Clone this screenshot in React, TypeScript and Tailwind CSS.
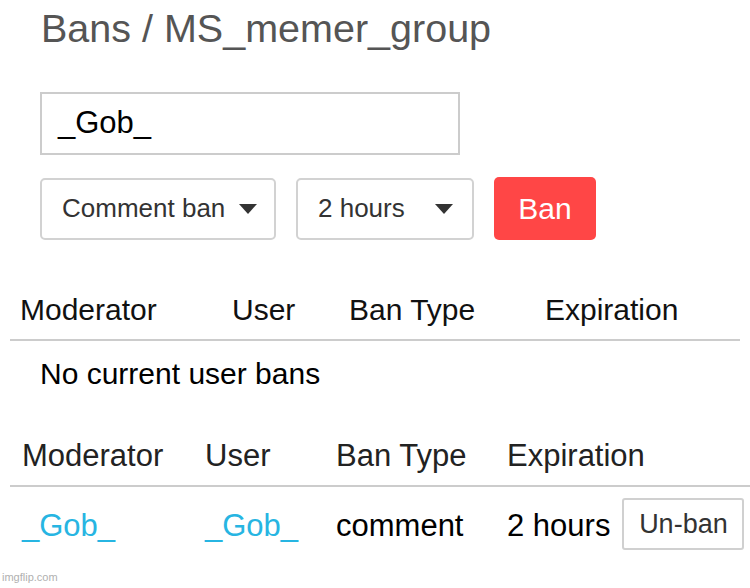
import React from "react";

function Caret() {
  return (
    <svg width="18" height="10" viewBox="0 0 18 10" className="shrink-0">
      <path d="M0 0 L18 0 L9 10 Z" fill="#333333" />
    </svg>
  );
}

export default function App() {
  return (
    <div
      className="relative w-[750px] h-[588px] overflow-hidden bg-white"
      style={{ fontFamily: '"Liberation Sans", Arial, sans-serif' }}
    >
      <div className="pt-[4px] pl-[41px] text-[39.5px] leading-[48px] text-[#555555]">
        Bans / MS_memer_group
      </div>

      <div className="ml-[40px] mt-[40px] flex h-[63px] w-[420px] items-center border-2 border-[#cccccc] pl-[16px] text-[31px] text-black">
        _Gob_
      </div>

      <div className="ml-[40px] mt-[22px] flex items-center">
        <div className="flex h-[62px] w-[236px] items-center justify-between rounded-[5px] border-2 border-[#d2d2d2] pl-[20px] pr-[17px] text-[26px] text-[#333333]">
          <span>Comment ban</span>
          <Caret />
        </div>
        <div className="ml-[20px] flex h-[62px] w-[178px] items-center justify-between rounded-[5px] border-2 border-[#d2d2d2] pl-[20px] pr-[19px] text-[26px] text-[#333333]">
          <span>2 hours</span>
          <Caret />
        </div>
        <div className="ml-[20px] flex h-[63px] w-[102px] items-center justify-center rounded-[5px] bg-[#ff4646] text-[30px] text-white">
          Ban
        </div>
      </div>

      <div className="mx-[10px] mt-[52px] grid grid-cols-[212px_117px_196px_1fr] border-b-2 border-[#cccccc] pb-[11px] pl-[10px] text-[30px] leading-[36px] text-[#111111]">
        <div>Moderator</div>
        <div>User</div>
        <div>Ban Type</div>
        <div>Expiration</div>
      </div>

      <div className="ml-[40px] mt-[15px] text-[30px] leading-[36px] text-black">
        No current user bans
      </div>

      <div className="ml-[10px] mt-[46px] grid grid-cols-[183px_131px_171px_1fr] border-b-2 border-[#cccccc] pb-[11px] pl-[12px] text-[31px] leading-[36px] text-[#222222]">
        <div>Moderator</div>
        <div>User</div>
        <div>Ban Type</div>
        <div>Expiration</div>
      </div>

      <div className="ml-[10px] mt-[11px] grid grid-cols-[183px_131px_171px_1fr] items-center pl-[12px] text-[31px] leading-[36px]">
        <div className="pt-[4px] text-[#27b5e2]">_Gob_</div>
        <div className="pt-[4px] text-[#27b5e2]">_Gob_</div>
        <div className="pt-[4px] text-black">comment</div>
        <div className="flex items-center gap-[12px]">
          <span className="pt-[4px] text-black">2 hours</span>
          <div className="flex h-[52px] w-[122px] items-center justify-center rounded-[3px] border-2 border-[#d0d0d0] text-[27px] text-[#333333]">
            Un-ban
          </div>
        </div>
      </div>

      <div className="absolute bottom-[4px] left-[2px] text-[11px] leading-[13px] text-[#b0b0b0]">
        imgflip.com
      </div>
    </div>
  );
}
